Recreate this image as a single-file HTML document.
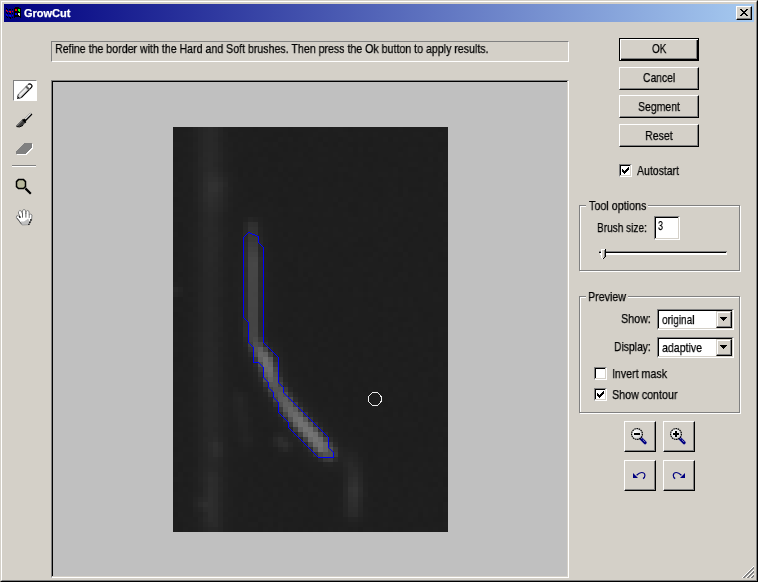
<!DOCTYPE html>
<html><head><meta charset="utf-8"><title>GrowCut</title>
<style>
html,body{margin:0;padding:0}
body{width:758px;height:582px;overflow:hidden;position:relative;background:#d4d0c8;font-family:"Liberation Sans",sans-serif;font-size:13px;color:#000}
.a{position:absolute}
.t{position:absolute;white-space:nowrap;will-change:transform;-webkit-text-stroke:0.25px currentColor;transform-origin:0 0;line-height:15px;height:15px}
.btn{position:absolute;box-sizing:border-box;background:#d4d0c8;border:1px solid;border-color:#fff #000 #000 #fff;box-shadow:inset -1px -1px 0 #808080}
.sunk{position:absolute;box-sizing:border-box;border:1px solid;border-color:#808080 #fff #fff #808080}
.sunk2{position:absolute;box-sizing:border-box;border:1px solid;border-color:#808080 #fff #fff #808080;box-shadow:inset -1px -1px 0 #d4d0c8,inset 1px 1px 0 #000;background:#fff}
.grp{position:absolute;box-sizing:border-box;border:1px solid #808080;box-shadow:1px 1px 0 #fff,inset 1px 1px 0 #fff}
.lbl{background:#d4d0c8}
.b2{border-color:#d4d0c8 #000 #000 #d4d0c8;box-shadow:inset -1px -1px 0 #808080,inset 1px 1px 0 #fff}
</style></head><body>
<!-- window frame -->
<div class="a" style="left:0;top:0;width:758px;height:582px;box-sizing:border-box;border:1px solid;border-color:#d4d0c8 #000 #000 #d4d0c8"></div>
<div class="a" style="left:1px;top:1px;width:756px;height:580px;box-sizing:border-box;border:1px solid;border-color:#fff #808080 #808080 #fff"></div>
<!-- title bar -->
<div class="a" id="title" style="left:4px;top:4px;width:750px;height:18px;background:linear-gradient(90deg,#000080,#a6caf0)"></div>
<span class="t" id="ttl" style="left:24.00px;top:6px;color:#fff;font-weight:bold;font-size:11px;transform:scaleX(1.0004)">GrowCut</span>
<!--TICON-->
<svg class="a" style="left:4px;top:4px" width="20" height="18" viewBox="4 4 20 18" shape-rendering="crispEdges">
<path d="M15 7h4v1h2v10h-1v-1h-5v1h-1v-10h1z" fill="#000"/>
<rect x="15" y="9" width="2" height="2" fill="#ff0000"/>
<rect x="18" y="9" width="2" height="2" fill="#00ff00"/><rect x="19" y="11" width="1" height="1" fill="#00ff00"/>
<rect x="15" y="13" width="2" height="2" fill="#0000ff"/>
<rect x="18" y="13" width="2" height="2" fill="#e0e0c0"/><rect x="19" y="15" width="1" height="1" fill="#e0e0c0"/>
<g fill="#000"><rect x="6" y="8" width="1" height="1"/><rect x="7" y="9" width="1" height="1"/><rect x="9" y="9" width="2" height="1"/><rect x="12" y="9" width="1" height="1"/>
<rect x="6" y="12" width="1" height="1"/><rect x="7" y="13" width="1" height="1"/><rect x="9" y="13" width="2" height="1"/><rect x="12" y="13" width="1" height="1"/>
<rect x="6" y="16" width="1" height="1"/><rect x="7" y="17" width="1" height="1"/><rect x="10" y="17" width="1" height="2"/><rect x="9" y="17" width="1" height="1"/><rect x="12" y="17" width="1" height="1"/></g>
<g fill="#ff0000"><rect x="6" y="10" width="1" height="1"/><rect x="7" y="11" width="1" height="1"/><rect x="9" y="11" width="2" height="1"/><rect x="10" y="12" width="1" height="1"/><rect x="12" y="11" width="1" height="1"/></g>
<g fill="#0000ff"><rect x="6" y="14" width="1" height="1"/><rect x="7" y="15" width="1" height="1"/><rect x="6" y="15" width="1" height="1" opacity="0.5"/><rect x="9" y="15" width="2" height="1"/><rect x="10" y="16" width="1" height="1"/><rect x="12" y="15" width="1" height="1"/></g>
</svg>
<!--/TICON-->
<!-- close -->
<div class="btn" style="left:736px;top:6px;width:16px;height:14px"></div>
<svg class="a" style="left:740px;top:9px" width="8" height="7" shape-rendering="crispEdges"><path d="M0 0h2v1h1v1h2v-1h1v-1h2v1h-1v1h-1v1h-1v1h1v1h1v1h1v1h-2v-1h-1v-1h-2v1h-1v1h-2v-1h1v-1h1v-1h1v-1h-1v-1h-1v-1h-1z" fill="#000"/></svg>
<!-- status -->
<div class="sunk" style="left:51px;top:41px;width:518px;height:21px"></div>
<span class="t" id="status" style="left:55.18px;top:41px;transform:scaleX(0.8166)">Refine the border with the Hard and Soft brushes. Then press the Ok button to apply results.</span>
<!-- canvas frame -->
<div class="sunk2" id="canvas" style="left:51px;top:80px;width:518px;height:498px;background:#c0c0c0"></div>
<div class="a" id="img" style="left:173px;top:127px;width:275px;height:405px;background:#1e1e1e"></div>
<!--IMG--><svg class="a" id="imgsvg" style="left:173px;top:127px" width="275" height="405" viewBox="0 0 275 405" shape-rendering="crispEdges">
<path fill="#1d1d1d" d="M80 0h5v5h-5zM115 0h5v5h-5zM175 0h5v5h-5zM265 0h5v5h-5zM100 5h10v5h-10zM115 5h15v5h-15zM255 5h5v5h-5zM90 10h15v5h-15zM120 10h5v5h-5zM145 10h5v5h-5zM165 10h5v5h-5zM195 10h5v5h-5zM215 10h5v5h-5zM105 15h10v5h-10zM130 15h5v5h-5zM150 15h5v5h-5zM160 15h5v5h-5zM175 15h10v5h-10zM190 15h10v5h-10zM230 15h5v5h-5zM245 15h5v5h-5zM265 15h10v5h-10zM90 20h5v5h-5zM110 20h5v5h-5zM120 20h5v5h-5zM135 20h5v5h-5zM180 20h5v5h-5zM190 20h5v5h-5zM225 20h5v5h-5zM265 20h5v5h-5zM75 25h5v5h-5zM85 25h5v5h-5zM95 25h10v5h-10zM130 25h5v5h-5zM180 25h5v5h-5zM190 25h15v5h-15zM0 30h5v5h-5zM70 30h5v5h-5zM95 30h15v5h-15zM135 30h5v5h-5zM200 30h5v5h-5zM210 30h5v5h-5zM250 30h5v5h-5zM260 30h5v5h-5zM165 35h5v5h-5zM175 35h5v5h-5zM190 35h10v5h-10zM215 35h10v5h-10zM65 40h5v5h-5zM80 40h5v5h-5zM95 40h10v5h-10zM110 40h5v5h-5zM125 40h5v5h-5zM195 40h5v5h-5zM225 40h5v5h-5zM235 40h10v5h-10zM65 45h5v5h-5zM75 45h5v5h-5zM90 45h5v5h-5zM105 45h5v5h-5zM115 45h15v5h-15zM160 45h5v5h-5zM170 45h5v5h-5zM260 45h5v5h-5zM5 50h5v5h-5zM110 50h5v5h-5zM120 50h5v5h-5zM150 50h5v5h-5zM160 50h5v5h-5zM170 50h10v5h-10zM205 50h5v5h-5zM225 50h5v5h-5zM245 50h5v5h-5zM115 55h5v5h-5zM135 55h10v5h-10zM155 55h5v5h-5zM185 55h5v5h-5zM195 55h5v5h-5zM225 55h5v5h-5zM270 55h5v5h-5zM75 60h5v5h-5zM105 60h5v5h-5zM125 60h5v5h-5zM180 60h5v5h-5zM200 60h10v5h-10zM225 60h5v5h-5zM235 60h15v5h-15zM80 65h10v5h-10zM130 65h5v5h-5zM185 65h5v5h-5zM205 65h5v5h-5zM225 65h5v5h-5zM255 65h5v5h-5zM0 70h5v5h-5zM75 70h5v5h-5zM95 70h5v5h-5zM105 70h10v5h-10zM165 70h5v5h-5zM200 70h5v5h-5zM105 75h10v5h-10zM135 75h5v5h-5zM160 75h5v5h-5zM175 75h10v5h-10zM265 75h5v5h-5zM175 80h10v5h-10zM205 80h5v5h-5zM235 80h5v5h-5zM110 85h5v5h-5zM180 85h5v5h-5zM220 85h5v5h-5zM250 85h5v5h-5zM125 90h5v5h-5zM135 90h5v5h-5zM230 90h5v5h-5zM5 95h5v5h-5zM140 95h5v5h-5zM225 95h5v5h-5zM245 95h5v5h-5zM270 95h5v5h-5zM5 100h5v5h-5zM205 100h5v5h-5zM220 100h5v5h-5zM245 100h5v5h-5zM5 105h5v5h-5zM110 105h5v5h-5zM130 105h5v5h-5zM220 105h5v5h-5zM240 105h5v5h-5zM260 105h5v5h-5zM140 110h5v5h-5zM185 110h5v5h-5zM195 110h5v5h-5zM210 110h5v5h-5zM235 110h5v5h-5zM250 110h5v5h-5zM265 110h5v5h-5zM125 115h5v5h-5zM160 115h5v5h-5zM180 115h20v5h-20zM230 115h5v5h-5zM155 120h5v5h-5zM200 120h5v5h-5zM230 120h5v5h-5zM255 120h5v5h-5zM0 125h5v5h-5zM130 125h5v5h-5zM165 125h5v5h-5zM180 125h5v5h-5zM190 125h10v5h-10zM210 125h5v5h-5zM220 125h10v5h-10zM235 125h5v5h-5zM265 125h5v5h-5zM120 130h5v5h-5zM170 130h5v5h-5zM205 130h5v5h-5zM250 130h5v5h-5zM265 130h10v5h-10zM110 135h10v5h-10zM150 135h5v5h-5zM170 135h10v5h-10zM225 135h5v5h-5zM115 140h10v5h-10zM220 140h10v5h-10zM255 140h5v5h-5zM5 145h5v5h-5zM120 145h5v5h-5zM130 145h5v5h-5zM150 145h10v5h-10zM190 145h10v5h-10zM220 145h5v5h-5zM235 145h5v5h-5zM255 145h5v5h-5zM265 145h10v5h-10zM135 150h5v5h-5zM210 150h5v5h-5zM115 155h5v5h-5zM130 155h10v5h-10zM155 155h5v5h-5zM190 155h5v5h-5zM230 155h5v5h-5zM115 160h15v5h-15zM135 160h5v5h-5zM145 160h5v5h-5zM165 160h5v5h-5zM175 160h5v5h-5zM190 160h5v5h-5zM230 160h5v5h-5zM260 160h5v5h-5zM150 165h5v5h-5zM5 170h5v5h-5zM190 170h5v5h-5zM200 170h5v5h-5zM240 170h5v5h-5zM155 175h5v5h-5zM195 175h5v5h-5zM205 175h5v5h-5zM120 180h5v5h-5zM155 180h5v5h-5zM165 180h5v5h-5zM205 180h5v5h-5zM215 180h10v5h-10zM245 180h5v5h-5zM0 185h5v5h-5zM150 185h5v5h-5zM160 185h5v5h-5zM250 185h10v5h-10zM5 190h5v5h-5zM115 190h5v5h-5zM135 190h5v5h-5zM150 190h5v5h-5zM160 190h10v5h-10zM205 190h5v5h-5zM225 190h10v5h-10zM250 190h5v5h-5zM150 195h5v5h-5zM175 195h5v5h-5zM200 195h5v5h-5zM215 195h5v5h-5zM5 200h5v5h-5zM105 200h5v5h-5zM145 200h5v5h-5zM155 200h5v5h-5zM195 200h5v5h-5zM205 200h5v5h-5zM225 200h5v5h-5zM235 200h5v5h-5zM260 200h5v5h-5zM115 205h5v5h-5zM140 205h5v5h-5zM165 205h5v5h-5zM200 205h10v5h-10zM120 210h5v5h-5zM150 210h5v5h-5zM180 210h5v5h-5zM220 210h5v5h-5zM260 210h5v5h-5zM130 215h5v5h-5zM140 215h5v5h-5zM165 215h10v5h-10zM180 215h5v5h-5zM190 215h5v5h-5zM205 215h10v5h-10zM235 215h5v5h-5zM260 215h5v5h-5zM145 220h10v5h-10zM200 220h5v5h-5zM225 220h5v5h-5zM255 220h15v5h-15zM5 225h5v5h-5zM170 225h5v5h-5zM180 225h10v5h-10zM200 225h5v5h-5zM215 225h5v5h-5zM240 225h5v5h-5zM0 230h10v5h-10zM175 230h5v5h-5zM185 230h5v5h-5zM195 230h5v5h-5zM225 230h10v5h-10zM250 230h5v5h-5zM260 230h5v5h-5zM140 235h5v5h-5zM170 235h5v5h-5zM205 235h5v5h-5zM260 235h5v5h-5zM270 235h5v5h-5zM140 240h5v5h-5zM160 240h5v5h-5zM180 240h5v5h-5zM210 240h5v5h-5zM245 240h10v5h-10zM130 245h5v5h-5zM170 245h5v5h-5zM180 245h5v5h-5zM220 245h5v5h-5zM240 245h5v5h-5zM150 250h5v5h-5zM180 250h5v5h-5zM200 250h5v5h-5zM225 250h10v5h-10zM255 250h10v5h-10zM140 255h5v5h-5zM155 255h5v5h-5zM175 255h5v5h-5zM185 255h5v5h-5zM260 255h10v5h-10zM155 260h5v5h-5zM170 260h10v5h-10zM190 260h5v5h-5zM215 260h5v5h-5zM260 260h5v5h-5zM160 265h5v5h-5zM170 265h15v5h-15zM195 265h5v5h-5zM205 265h5v5h-5zM235 265h5v5h-5zM255 265h5v5h-5zM150 270h5v5h-5zM175 270h5v5h-5zM195 270h5v5h-5zM235 270h5v5h-5zM170 275h10v5h-10zM210 275h5v5h-5zM230 275h5v5h-5zM240 275h5v5h-5zM175 280h5v5h-5zM215 280h5v5h-5zM225 280h5v5h-5zM240 280h5v5h-5zM250 280h5v5h-5zM170 285h10v5h-10zM210 285h10v5h-10zM225 285h5v5h-5zM250 285h5v5h-5zM190 290h5v5h-5zM240 290h5v5h-5zM260 290h5v5h-5zM190 295h10v5h-10zM245 295h5v5h-5zM270 295h5v5h-5zM90 300h5v5h-5zM180 300h5v5h-5zM205 300h5v5h-5zM245 300h5v5h-5zM255 300h5v5h-5zM185 305h5v5h-5zM215 305h10v5h-10zM230 305h5v5h-5zM250 305h5v5h-5zM265 305h5v5h-5zM10 310h5v5h-5zM195 310h5v5h-5zM210 310h5v5h-5zM240 310h5v5h-5zM250 310h5v5h-5zM270 310h5v5h-5zM200 315h5v5h-5zM225 315h5v5h-5zM250 315h5v5h-5zM270 315h5v5h-5zM0 320h5v5h-5zM200 320h5v5h-5zM215 320h5v5h-5zM225 320h5v5h-5zM95 325h5v5h-5zM195 325h5v5h-5zM230 325h10v5h-10zM195 330h5v5h-5zM225 330h10v5h-10zM255 330h5v5h-5zM5 335h5v5h-5zM80 335h5v5h-5zM215 335h5v5h-5zM5 340h5v5h-5zM80 340h5v5h-5zM110 340h5v5h-5zM125 340h5v5h-5zM215 340h5v5h-5zM240 340h5v5h-5zM0 345h5v5h-5zM10 345h5v5h-5zM85 345h5v5h-5zM135 345h5v5h-5zM225 345h5v5h-5zM260 345h5v5h-5zM70 350h5v5h-5zM80 350h5v5h-5zM115 350h10v5h-10zM210 350h5v5h-5zM225 350h5v5h-5zM270 350h5v5h-5zM0 355h5v5h-5zM10 355h5v5h-5zM85 355h5v5h-5zM100 355h10v5h-10zM115 355h15v5h-15zM140 355h5v5h-5zM255 355h10v5h-10zM270 355h5v5h-5zM0 360h5v5h-5zM90 360h5v5h-5zM120 360h5v5h-5zM130 360h5v5h-5zM230 360h5v5h-5zM65 365h5v5h-5zM95 365h5v5h-5zM105 365h5v5h-5zM125 365h5v5h-5zM135 365h10v5h-10zM230 365h5v5h-5zM90 370h5v5h-5zM135 370h5v5h-5zM200 370h5v5h-5zM220 370h5v5h-5zM270 370h5v5h-5zM0 375h5v5h-5zM75 375h5v5h-5zM100 375h5v5h-5zM135 375h5v5h-5zM210 375h5v5h-5zM265 375h5v5h-5zM85 380h5v5h-5zM120 380h5v5h-5zM135 380h10v5h-10zM155 380h5v5h-5zM200 380h5v5h-5zM220 380h5v5h-5zM265 380h5v5h-5zM0 385h5v5h-5zM65 385h5v5h-5zM90 385h5v5h-5zM100 385h5v5h-5zM145 385h5v5h-5zM155 385h5v5h-5zM245 385h5v5h-5zM265 385h5v5h-5zM75 390h10v5h-10zM110 390h10v5h-10zM130 390h10v5h-10zM220 390h10v5h-10zM245 390h5v5h-5zM260 390h10v5h-10zM5 395h5v5h-5zM85 395h5v5h-5zM100 395h5v5h-5zM130 395h5v5h-5zM140 395h10v5h-10zM200 395h5v5h-5zM235 395h5v5h-5zM250 395h5v5h-5zM5 400h5v5h-5zM85 400h5v5h-5zM110 400h5v5h-5zM125 400h5v5h-5zM135 400h5v5h-5zM145 400h5v5h-5zM185 400h5v5h-5zM215 400h5v5h-5zM225 400h5v5h-5z"/>
<path fill="#1f1f1f" d="M15 0h5v5h-5zM55 0h10v5h-10zM145 0h10v5h-10zM160 0h10v5h-10zM225 0h5v5h-5zM10 5h5v5h-5zM65 5h5v5h-5zM140 5h5v5h-5zM165 5h10v5h-10zM185 5h5v5h-5zM200 5h5v5h-5zM240 5h10v5h-10zM265 5h5v5h-5zM15 10h5v5h-5zM55 10h10v5h-10zM80 10h5v5h-5zM105 10h5v5h-5zM115 10h5v5h-5zM135 10h5v5h-5zM150 10h5v5h-5zM175 10h5v5h-5zM210 10h5v5h-5zM220 10h5v5h-5zM230 10h5v5h-5zM250 10h10v5h-10zM0 15h10v5h-10zM15 15h5v5h-5zM65 15h5v5h-5zM75 15h5v5h-5zM90 15h5v5h-5zM100 15h5v5h-5zM135 15h5v5h-5zM145 15h5v5h-5zM165 15h5v5h-5zM10 20h5v5h-5zM55 20h5v5h-5zM65 20h5v5h-5zM80 20h5v5h-5zM145 20h10v5h-10zM175 20h5v5h-5zM185 20h5v5h-5zM195 20h5v5h-5zM235 20h10v5h-10zM255 20h5v5h-5zM15 25h5v5h-5zM60 25h5v5h-5zM125 25h5v5h-5zM160 25h5v5h-5zM225 25h5v5h-5zM235 25h5v5h-5zM265 25h5v5h-5zM10 30h10v5h-10zM85 30h10v5h-10zM145 30h10v5h-10zM165 30h5v5h-5zM255 30h5v5h-5zM265 30h5v5h-5zM5 35h5v5h-5zM55 35h5v5h-5zM105 35h5v5h-5zM120 35h10v5h-10zM185 35h5v5h-5zM235 35h10v5h-10zM270 35h5v5h-5zM10 40h5v5h-5zM55 40h10v5h-10zM85 40h5v5h-5zM105 40h5v5h-5zM145 40h5v5h-5zM165 40h10v5h-10zM220 40h5v5h-5zM250 40h10v5h-10zM270 40h5v5h-5zM10 45h10v5h-10zM60 45h5v5h-5zM70 45h5v5h-5zM85 45h5v5h-5zM180 45h5v5h-5zM205 45h10v5h-10zM220 45h5v5h-5zM265 45h5v5h-5zM0 50h5v5h-5zM10 50h10v5h-10zM90 50h5v5h-5zM100 50h5v5h-5zM115 50h5v5h-5zM135 50h5v5h-5zM270 50h5v5h-5zM5 55h15v5h-15zM60 55h10v5h-10zM165 55h5v5h-5zM215 55h5v5h-5zM250 55h5v5h-5zM265 55h5v5h-5zM10 60h5v5h-5zM60 60h10v5h-10zM110 60h5v5h-5zM135 60h5v5h-5zM145 60h5v5h-5zM220 60h5v5h-5zM230 60h5v5h-5zM265 60h5v5h-5zM0 65h10v5h-10zM15 65h5v5h-5zM60 65h5v5h-5zM70 65h5v5h-5zM95 65h5v5h-5zM145 65h5v5h-5zM215 65h5v5h-5zM230 65h5v5h-5zM250 65h5v5h-5zM270 65h5v5h-5zM10 70h10v5h-10zM60 70h10v5h-10zM90 70h5v5h-5zM135 70h5v5h-5zM145 70h5v5h-5zM160 70h5v5h-5zM175 70h5v5h-5zM220 70h10v5h-10zM240 70h5v5h-5zM255 70h5v5h-5zM15 75h5v5h-5zM60 75h5v5h-5zM75 75h10v5h-10zM95 75h5v5h-5zM165 75h10v5h-10zM190 75h5v5h-5zM200 75h5v5h-5zM215 75h5v5h-5zM0 80h10v5h-10zM15 80h5v5h-5zM65 80h15v5h-15zM85 80h15v5h-15zM105 80h5v5h-5zM120 80h10v5h-10zM155 80h5v5h-5zM200 80h5v5h-5zM210 80h5v5h-5zM220 80h10v5h-10zM60 85h30v5h-30zM95 85h10v5h-10zM140 85h5v5h-5zM150 85h10v5h-10zM170 85h5v5h-5zM200 85h5v5h-5zM210 85h5v5h-5zM225 85h5v5h-5zM235 85h5v5h-5zM265 85h10v5h-10zM0 90h20v5h-20zM55 90h15v5h-15zM90 90h5v5h-5zM175 90h10v5h-10zM190 90h5v5h-5zM210 90h5v5h-5zM220 90h5v5h-5zM245 90h5v5h-5zM270 90h5v5h-5zM10 95h10v5h-10zM60 95h10v5h-10zM90 95h10v5h-10zM105 95h5v5h-5zM205 95h5v5h-5zM60 100h10v5h-10zM95 100h5v5h-5zM140 100h5v5h-5zM150 100h5v5h-5zM160 100h5v5h-5zM175 100h5v5h-5zM200 100h5v5h-5zM240 100h5v5h-5zM0 105h5v5h-5zM15 105h5v5h-5zM55 105h5v5h-5zM95 105h5v5h-5zM105 105h5v5h-5zM115 105h5v5h-5zM135 105h5v5h-5zM160 105h10v5h-10zM185 105h5v5h-5zM210 105h5v5h-5zM15 110h5v5h-5zM95 110h5v5h-5zM110 110h5v5h-5zM145 110h5v5h-5zM175 110h10v5h-10zM215 110h10v5h-10zM270 110h5v5h-5zM10 115h5v5h-5zM60 115h5v5h-5zM150 115h5v5h-5zM170 115h5v5h-5zM205 115h15v5h-15zM10 120h10v5h-10zM95 120h5v5h-5zM115 120h5v5h-5zM130 120h5v5h-5zM210 120h5v5h-5zM225 120h5v5h-5zM270 120h5v5h-5zM60 125h5v5h-5zM100 125h5v5h-5zM110 125h10v5h-10zM125 125h5v5h-5zM140 125h5v5h-5zM200 125h5v5h-5zM230 125h5v5h-5zM255 125h5v5h-5zM15 130h5v5h-5zM115 130h5v5h-5zM125 130h5v5h-5zM135 130h5v5h-5zM195 130h5v5h-5zM210 130h5v5h-5zM255 130h5v5h-5zM5 135h5v5h-5zM15 135h5v5h-5zM95 135h15v5h-15zM125 135h15v5h-15zM155 135h5v5h-5zM185 135h5v5h-5zM230 135h5v5h-5zM245 135h5v5h-5zM5 140h5v5h-5zM15 140h5v5h-5zM55 140h5v5h-5zM95 140h10v5h-10zM125 140h5v5h-5zM170 140h10v5h-10zM190 140h5v5h-5zM15 145h5v5h-5zM55 145h5v5h-5zM125 145h5v5h-5zM135 145h5v5h-5zM145 145h5v5h-5zM205 145h5v5h-5zM225 145h10v5h-10zM245 145h5v5h-5zM5 150h5v5h-5zM55 150h5v5h-5zM100 150h5v5h-5zM115 150h5v5h-5zM130 150h5v5h-5zM150 150h5v5h-5zM170 150h5v5h-5zM195 150h5v5h-5zM205 150h5v5h-5zM220 150h5v5h-5zM230 150h5v5h-5zM5 155h5v5h-5zM15 155h5v5h-5zM55 155h5v5h-5zM95 155h5v5h-5zM105 155h5v5h-5zM145 155h5v5h-5zM200 155h5v5h-5zM215 155h5v5h-5zM250 155h5v5h-5zM10 160h5v5h-5zM100 160h5v5h-5zM155 160h5v5h-5zM180 160h5v5h-5zM250 160h5v5h-5zM10 165h5v5h-5zM55 165h5v5h-5zM100 165h5v5h-5zM110 165h5v5h-5zM125 165h10v5h-10zM155 165h5v5h-5zM180 165h10v5h-10zM195 165h5v5h-5zM260 165h5v5h-5zM10 170h5v5h-5zM55 170h5v5h-5zM100 170h5v5h-5zM145 170h5v5h-5zM210 170h10v5h-10zM225 170h5v5h-5zM235 170h5v5h-5zM260 170h10v5h-10zM15 175h5v5h-5zM100 175h10v5h-10zM135 175h5v5h-5zM210 175h10v5h-10zM225 175h5v5h-5zM235 175h5v5h-5zM0 180h10v5h-10zM100 180h10v5h-10zM180 180h5v5h-5zM195 180h5v5h-5zM10 185h5v5h-5zM60 185h5v5h-5zM95 185h10v5h-10zM120 185h5v5h-5zM130 185h5v5h-5zM180 185h5v5h-5zM205 185h10v5h-10zM220 185h5v5h-5zM240 185h5v5h-5zM60 190h5v5h-5zM100 190h5v5h-5zM125 190h5v5h-5zM170 190h10v5h-10zM215 190h5v5h-5zM240 190h5v5h-5zM15 195h5v5h-5zM55 195h10v5h-10zM95 195h15v5h-15zM115 195h5v5h-5zM125 195h5v5h-5zM230 195h10v5h-10zM15 200h5v5h-5zM60 200h5v5h-5zM95 200h10v5h-10zM135 200h5v5h-5zM150 200h5v5h-5zM160 200h5v5h-5zM220 200h5v5h-5zM240 200h5v5h-5zM265 200h10v5h-10zM0 205h5v5h-5zM55 205h10v5h-10zM100 205h5v5h-5zM135 205h5v5h-5zM145 205h5v5h-5zM195 205h5v5h-5zM210 205h5v5h-5zM255 205h5v5h-5zM265 205h5v5h-5zM0 210h5v5h-5zM10 210h10v5h-10zM55 210h5v5h-5zM105 210h5v5h-5zM115 210h5v5h-5zM130 210h10v5h-10zM155 210h5v5h-5zM190 210h5v5h-5zM210 210h5v5h-5zM225 210h10v5h-10zM240 210h10v5h-10zM255 210h5v5h-5zM15 215h5v5h-5zM55 215h10v5h-10zM110 215h5v5h-5zM145 215h10v5h-10zM175 215h5v5h-5zM245 215h5v5h-5zM255 215h5v5h-5zM0 220h5v5h-5zM10 220h10v5h-10zM55 220h10v5h-10zM140 220h5v5h-5zM190 220h5v5h-5zM210 220h5v5h-5zM235 220h5v5h-5zM55 225h5v5h-5zM120 225h5v5h-5zM130 225h5v5h-5zM175 225h5v5h-5zM190 225h10v5h-10zM225 225h5v5h-5zM250 225h10v5h-10zM10 230h10v5h-10zM65 230h5v5h-5zM125 230h10v5h-10zM150 230h5v5h-5zM245 230h5v5h-5zM255 230h5v5h-5zM10 235h5v5h-5zM65 235h5v5h-5zM115 235h10v5h-10zM130 235h5v5h-5zM155 235h5v5h-5zM165 235h5v5h-5zM175 235h5v5h-5zM210 235h5v5h-5zM230 235h5v5h-5zM265 235h5v5h-5zM5 240h5v5h-5zM15 240h5v5h-5zM55 240h20v5h-20zM115 240h10v5h-10zM135 240h5v5h-5zM170 240h5v5h-5zM185 240h5v5h-5zM195 240h5v5h-5zM205 240h5v5h-5zM260 240h5v5h-5zM0 245h20v5h-20zM55 245h10v5h-10zM115 245h5v5h-5zM135 245h5v5h-5zM215 245h5v5h-5zM230 245h5v5h-5zM245 245h15v5h-15zM265 245h5v5h-5zM0 250h5v5h-5zM10 250h10v5h-10zM55 250h10v5h-10zM70 250h10v5h-10zM125 250h5v5h-5zM160 250h5v5h-5zM190 250h5v5h-5zM250 250h5v5h-5zM15 255h5v5h-5zM75 255h5v5h-5zM125 255h5v5h-5zM150 255h5v5h-5zM160 255h10v5h-10zM205 255h10v5h-10zM225 255h5v5h-5zM250 255h5v5h-5zM55 260h5v5h-5zM65 260h5v5h-5zM125 260h10v5h-10zM165 260h5v5h-5zM180 260h5v5h-5zM195 260h5v5h-5zM210 260h5v5h-5zM220 260h5v5h-5zM15 265h5v5h-5zM75 265h5v5h-5zM130 265h10v5h-10zM200 265h5v5h-5zM225 265h10v5h-10zM240 265h5v5h-5zM250 265h5v5h-5zM265 265h5v5h-5zM0 270h10v5h-10zM15 270h5v5h-5zM75 270h10v5h-10zM135 270h5v5h-5zM155 270h5v5h-5zM170 270h5v5h-5zM180 270h5v5h-5zM205 270h5v5h-5zM215 270h5v5h-5zM240 270h5v5h-5zM255 270h15v5h-15zM10 275h5v5h-5zM75 275h5v5h-5zM85 275h5v5h-5zM140 275h5v5h-5zM200 275h5v5h-5zM245 275h5v5h-5zM10 280h10v5h-10zM80 280h15v5h-15zM150 280h10v5h-10zM165 280h5v5h-5zM205 280h5v5h-5zM5 285h10v5h-10zM75 285h20v5h-20zM150 285h10v5h-10zM165 285h5v5h-5zM220 285h5v5h-5zM230 285h5v5h-5zM270 285h5v5h-5zM15 290h5v5h-5zM90 290h5v5h-5zM160 290h5v5h-5zM170 290h5v5h-5zM180 290h5v5h-5zM210 290h5v5h-5zM245 290h5v5h-5zM5 295h5v5h-5zM85 295h20v5h-20zM155 295h15v5h-15zM175 295h15v5h-15zM210 295h5v5h-5zM230 295h15v5h-15zM15 300h5v5h-5zM55 300h5v5h-5zM80 300h5v5h-5zM100 300h5v5h-5zM160 300h10v5h-10zM175 300h5v5h-5zM190 300h5v5h-5zM215 300h5v5h-5zM260 300h5v5h-5zM270 300h5v5h-5zM0 305h10v5h-10zM80 305h10v5h-10zM165 305h10v5h-10zM5 310h5v5h-5zM15 310h5v5h-5zM55 310h5v5h-5zM80 310h5v5h-5zM170 310h20v5h-20zM265 310h5v5h-5zM55 315h5v5h-5zM80 315h10v5h-10zM170 315h5v5h-5zM180 315h10v5h-10zM10 320h10v5h-10zM60 320h10v5h-10zM75 320h5v5h-5zM100 320h5v5h-5zM185 320h5v5h-5zM245 320h5v5h-5zM255 320h5v5h-5zM265 320h5v5h-5zM5 325h5v5h-5zM60 325h15v5h-15zM100 325h5v5h-5zM120 325h5v5h-5zM185 325h10v5h-10zM215 325h5v5h-5zM270 325h5v5h-5zM0 330h10v5h-10zM20 330h5v5h-5zM55 330h10v5h-10zM80 330h5v5h-5zM100 330h5v5h-5zM125 330h5v5h-5zM190 330h5v5h-5zM205 330h10v5h-10zM20 335h5v5h-5zM55 335h5v5h-5zM85 335h5v5h-5zM95 335h5v5h-5zM130 335h5v5h-5zM190 335h5v5h-5zM210 335h5v5h-5zM230 335h10v5h-10zM250 335h5v5h-5zM265 335h5v5h-5zM10 340h10v5h-10zM55 340h5v5h-5zM65 340h5v5h-5zM90 340h5v5h-5zM115 340h5v5h-5zM135 340h10v5h-10zM190 340h10v5h-10zM230 340h5v5h-5zM245 340h5v5h-5zM255 340h5v5h-5zM270 340h5v5h-5zM5 345h5v5h-5zM60 345h5v5h-5zM105 345h5v5h-5zM125 345h5v5h-5zM140 345h15v5h-15zM160 345h5v5h-5zM195 345h5v5h-5zM210 345h5v5h-5zM240 345h5v5h-5zM0 350h10v5h-10zM15 350h5v5h-5zM55 350h15v5h-15zM75 350h5v5h-5zM150 350h10v5h-10zM165 350h5v5h-5zM215 350h5v5h-5zM230 350h5v5h-5zM260 350h5v5h-5zM55 355h10v5h-10zM75 355h5v5h-5zM110 355h5v5h-5zM135 355h5v5h-5zM165 355h5v5h-5zM195 355h5v5h-5zM205 355h5v5h-5zM230 355h5v5h-5zM240 355h10v5h-10zM265 355h5v5h-5zM10 360h5v5h-5zM55 360h5v5h-5zM80 360h10v5h-10zM100 360h5v5h-5zM125 360h5v5h-5zM135 360h10v5h-10zM160 360h10v5h-10zM200 360h5v5h-5zM215 360h10v5h-10zM245 360h10v5h-10zM260 360h5v5h-5zM270 360h5v5h-5zM15 365h5v5h-5zM55 365h5v5h-5zM75 365h5v5h-5zM85 365h5v5h-5zM100 365h5v5h-5zM145 365h5v5h-5zM165 365h5v5h-5zM220 365h5v5h-5zM235 365h5v5h-5zM255 365h5v5h-5zM5 370h5v5h-5zM15 370h5v5h-5zM75 370h5v5h-5zM195 370h5v5h-5zM215 370h5v5h-5zM245 370h5v5h-5zM15 375h5v5h-5zM70 375h5v5h-5zM90 375h10v5h-10zM110 375h15v5h-15zM165 375h5v5h-5zM190 375h15v5h-15zM215 375h10v5h-10zM235 375h5v5h-5zM245 375h5v5h-5zM270 375h5v5h-5zM55 380h10v5h-10zM70 380h5v5h-5zM80 380h5v5h-5zM90 380h5v5h-5zM110 380h5v5h-5zM125 380h5v5h-5zM160 380h5v5h-5zM210 380h5v5h-5zM225 380h5v5h-5zM240 380h5v5h-5zM250 380h5v5h-5zM260 380h5v5h-5zM270 380h5v5h-5zM5 385h5v5h-5zM60 385h5v5h-5zM70 385h5v5h-5zM105 385h5v5h-5zM115 385h5v5h-5zM165 385h5v5h-5zM195 385h5v5h-5zM210 385h5v5h-5zM235 385h10v5h-10zM250 385h5v5h-5zM10 390h15v5h-15zM55 390h5v5h-5zM65 390h5v5h-5zM85 390h15v5h-15zM160 390h10v5h-10zM190 390h5v5h-5zM235 390h5v5h-5zM15 395h5v5h-5zM55 395h5v5h-5zM75 395h10v5h-10zM95 395h5v5h-5zM105 395h5v5h-5zM170 395h5v5h-5zM185 395h5v5h-5zM210 395h5v5h-5zM270 395h5v5h-5zM10 400h5v5h-5zM20 400h5v5h-5zM55 400h5v5h-5zM90 400h5v5h-5zM105 400h5v5h-5zM155 400h5v5h-5zM165 400h10v5h-10zM180 400h5v5h-5zM190 400h10v5h-10zM240 400h15v5h-15zM260 400h5v5h-5z"/>
<path fill="#202020" d="M50 0h5v5h-5zM15 5h5v5h-5zM50 15h10v5h-10zM15 20h5v5h-5zM55 25h5v5h-5zM55 30h5v5h-5zM15 35h5v5h-5zM15 40h5v5h-5zM60 50h5v5h-5zM55 70h5v5h-5zM55 80h5v5h-5zM15 85h10v5h-10zM55 85h5v5h-5zM20 90h5v5h-5zM55 95h5v5h-5zM15 100h5v5h-5zM55 100h5v5h-5zM90 100h5v5h-5zM60 105h10v5h-10zM90 105h5v5h-5zM55 110h15v5h-15zM15 115h5v5h-5zM55 115h5v5h-5zM65 115h5v5h-5zM90 115h5v5h-5zM55 120h15v5h-15zM15 125h5v5h-5zM55 125h5v5h-5zM90 125h10v5h-10zM50 130h15v5h-15zM95 130h5v5h-5zM55 135h5v5h-5zM20 140h5v5h-5zM60 140h5v5h-5zM60 145h5v5h-5zM95 145h5v5h-5zM15 150h5v5h-5zM50 150h5v5h-5zM60 150h5v5h-5zM95 150h5v5h-5zM0 155h5v5h-5zM15 160h5v5h-5zM55 160h10v5h-10zM95 160h5v5h-5zM20 165h5v5h-5zM60 165h5v5h-5zM95 165h5v5h-5zM15 170h5v5h-5zM50 170h5v5h-5zM60 170h5v5h-5zM95 170h5v5h-5zM20 175h5v5h-5zM55 175h10v5h-10zM95 175h5v5h-5zM50 180h15v5h-15zM95 180h5v5h-5zM15 185h10v5h-10zM50 185h10v5h-10zM15 190h5v5h-5zM50 190h10v5h-10zM95 190h5v5h-5zM50 195h5v5h-5zM50 200h10v5h-10zM15 205h5v5h-5zM95 205h5v5h-5zM60 210h5v5h-5zM95 210h10v5h-10zM65 215h5v5h-5zM105 215h5v5h-5zM65 220h5v5h-5zM15 225h5v5h-5zM50 225h5v5h-5zM65 225h5v5h-5zM110 225h5v5h-5zM55 230h5v5h-5zM110 230h5v5h-5zM50 235h10v5h-10zM70 235h5v5h-5zM50 240h5v5h-5zM75 245h5v5h-5zM115 250h10v5h-10zM55 255h5v5h-5zM15 260h5v5h-5zM80 260h5v5h-5zM120 260h5v5h-5zM20 265h5v5h-5zM55 265h5v5h-5zM85 265h5v5h-5zM125 265h5v5h-5zM85 270h5v5h-5zM130 270h5v5h-5zM15 275h5v5h-5zM90 275h5v5h-5zM135 275h5v5h-5zM55 280h5v5h-5zM75 280h5v5h-5zM140 280h5v5h-5zM15 285h5v5h-5zM55 285h5v5h-5zM95 285h5v5h-5zM145 285h5v5h-5zM55 290h5v5h-5zM95 290h10v5h-10zM150 290h5v5h-5zM20 295h5v5h-5zM55 295h10v5h-10zM75 295h5v5h-5zM60 300h5v5h-5zM75 300h5v5h-5zM105 300h5v5h-5zM20 305h5v5h-5zM55 305h10v5h-10zM160 305h5v5h-5zM20 310h5v5h-5zM60 310h5v5h-5zM95 310h5v5h-5zM165 310h5v5h-5zM20 315h5v5h-5zM65 315h5v5h-5zM95 315h5v5h-5zM175 315h5v5h-5zM20 320h5v5h-5zM55 320h5v5h-5zM70 320h5v5h-5zM120 320h10v5h-10zM180 320h5v5h-5zM20 325h5v5h-5zM55 325h5v5h-5zM105 325h15v5h-15zM125 325h5v5h-5zM130 330h5v5h-5zM135 335h15v5h-15zM20 340h5v5h-5zM145 340h10v5h-10zM55 345h5v5h-5zM165 345h5v5h-5zM190 345h5v5h-5zM20 350h5v5h-5zM190 350h5v5h-5zM20 355h5v5h-5zM20 360h5v5h-5zM55 370h5v5h-5zM165 370h5v5h-5zM190 370h5v5h-5zM55 375h5v5h-5zM165 380h5v5h-5zM190 380h5v5h-5zM50 385h10v5h-10zM190 385h5v5h-5zM170 390h5v5h-5zM20 395h5v5h-5zM50 395h5v5h-5zM175 395h10v5h-10zM50 400h5v5h-5z"/>
<path fill="#212121" d="M50 5h5v5h-5zM20 10h5v5h-5zM50 10h5v5h-5zM50 20h5v5h-5zM20 25h5v5h-5zM50 25h5v5h-5zM20 30h5v5h-5zM50 30h5v5h-5zM50 35h5v5h-5zM50 40h5v5h-5zM55 45h5v5h-5zM55 50h5v5h-5zM55 55h5v5h-5zM20 65h5v5h-5zM55 65h5v5h-5zM20 75h5v5h-5zM55 75h5v5h-5zM20 80h5v5h-5zM50 85h5v5h-5zM50 90h5v5h-5zM70 90h5v5h-5zM85 90h5v5h-5zM20 95h5v5h-5zM50 95h5v5h-5zM20 100h5v5h-5zM20 105h5v5h-5zM20 110h5v5h-5zM50 110h5v5h-5zM90 110h5v5h-5zM20 115h5v5h-5zM50 115h5v5h-5zM50 120h5v5h-5zM90 120h5v5h-5zM50 125h5v5h-5zM65 125h5v5h-5zM20 130h5v5h-5zM65 130h5v5h-5zM90 130h5v5h-5zM20 135h5v5h-5zM50 135h5v5h-5zM60 135h10v5h-10zM90 135h5v5h-5zM50 140h5v5h-5zM65 140h5v5h-5zM90 140h5v5h-5zM20 145h5v5h-5zM50 145h5v5h-5zM65 145h5v5h-5zM20 150h5v5h-5zM65 150h5v5h-5zM90 150h5v5h-5zM20 155h5v5h-5zM50 155h5v5h-5zM60 155h10v5h-10zM90 155h5v5h-5zM20 160h5v5h-5zM50 160h5v5h-5zM90 160h5v5h-5zM5 165h5v5h-5zM50 165h5v5h-5zM65 165h5v5h-5zM20 170h5v5h-5zM50 175h5v5h-5zM65 175h5v5h-5zM90 175h5v5h-5zM20 180h5v5h-5zM90 180h5v5h-5zM65 185h5v5h-5zM90 185h5v5h-5zM20 190h5v5h-5zM90 190h5v5h-5zM20 195h5v5h-5zM20 200h5v5h-5zM90 200h5v5h-5zM50 205h5v5h-5zM65 205h5v5h-5zM90 205h5v5h-5zM20 210h5v5h-5zM50 210h5v5h-5zM65 210h5v5h-5zM50 215h5v5h-5zM100 215h5v5h-5zM20 220h5v5h-5zM50 220h5v5h-5zM105 220h5v5h-5zM20 225h5v5h-5zM50 230h5v5h-5zM70 230h5v5h-5zM20 235h5v5h-5zM110 235h5v5h-5zM20 240h5v5h-5zM75 240h5v5h-5zM20 245h5v5h-5zM50 245h5v5h-5zM50 250h5v5h-5zM20 255h5v5h-5zM50 255h5v5h-5zM80 255h5v5h-5zM115 255h10v5h-10zM20 260h5v5h-5zM50 260h5v5h-5zM60 260h5v5h-5zM85 260h5v5h-5zM50 265h5v5h-5zM70 265h5v5h-5zM20 270h5v5h-5zM50 270h10v5h-10zM90 270h5v5h-5zM20 275h5v5h-5zM55 275h5v5h-5zM20 280h5v5h-5zM50 280h5v5h-5zM20 285h5v5h-5zM140 285h5v5h-5zM20 290h5v5h-5zM50 290h5v5h-5zM60 290h5v5h-5zM75 290h5v5h-5zM145 290h5v5h-5zM150 295h5v5h-5zM20 300h5v5h-5zM50 300h5v5h-5zM155 300h5v5h-5zM50 305h5v5h-5zM65 305h5v5h-5zM75 305h5v5h-5zM75 315h5v5h-5zM165 315h5v5h-5zM175 320h5v5h-5zM130 325h5v5h-5zM50 330h5v5h-5zM135 330h5v5h-5zM185 330h5v5h-5zM50 335h5v5h-5zM155 340h15v5h-15zM20 345h5v5h-5zM50 350h5v5h-5zM190 355h5v5h-5zM190 360h5v5h-5zM20 365h5v5h-5zM50 365h5v5h-5zM50 370h5v5h-5zM50 375h5v5h-5zM50 380h5v5h-5zM20 385h5v5h-5zM50 390h5v5h-5zM185 390h5v5h-5zM25 400h5v5h-5z"/>
<path fill="#222222" d="M20 0h5v5h-5zM20 5h5v5h-5zM20 15h5v5h-5zM20 20h5v5h-5zM20 35h5v5h-5zM20 40h5v5h-5zM20 45h5v5h-5zM20 50h5v5h-5zM20 55h5v5h-5zM20 60h5v5h-5zM55 60h5v5h-5zM20 70h5v5h-5zM85 95h5v5h-5zM50 100h5v5h-5zM50 105h5v5h-5zM20 120h5v5h-5zM20 125h5v5h-5zM90 145h5v5h-5zM65 160h5v5h-5zM90 165h5v5h-5zM45 170h5v5h-5zM65 170h5v5h-5zM90 170h5v5h-5zM45 175h5v5h-5zM65 180h5v5h-5zM65 190h5v5h-5zM65 195h5v5h-5zM90 195h5v5h-5zM65 200h5v5h-5zM20 205h5v5h-5zM45 210h5v5h-5zM20 215h5v5h-5zM45 220h5v5h-5zM70 225h5v5h-5zM105 225h5v5h-5zM20 230h5v5h-5zM75 235h5v5h-5zM110 240h5v5h-5zM20 250h5v5h-5zM80 250h5v5h-5zM70 270h5v5h-5zM50 275h5v5h-5zM70 275h5v5h-5zM95 275h5v5h-5zM130 275h5v5h-5zM70 280h5v5h-5zM95 280h5v5h-5zM135 280h5v5h-5zM50 285h5v5h-5zM60 285h5v5h-5zM100 285h5v5h-5zM50 295h5v5h-5zM105 295h5v5h-5zM65 300h5v5h-5zM110 300h5v5h-5zM100 305h5v5h-5zM50 310h5v5h-5zM65 310h5v5h-5zM50 315h5v5h-5zM70 315h5v5h-5zM120 315h5v5h-5zM50 320h5v5h-5zM170 320h5v5h-5zM25 325h5v5h-5zM50 325h5v5h-5zM160 335h10v5h-10zM50 340h5v5h-5zM50 345h5v5h-5zM50 355h5v5h-5zM25 360h5v5h-5zM50 360h5v5h-5zM190 365h5v5h-5zM20 380h5v5h-5zM25 385h5v5h-5zM25 395h5v5h-5z"/>
<path fill="#232323" d="M45 10h5v5h-5zM50 45h5v5h-5zM50 80h5v5h-5zM80 90h5v5h-5zM45 125h5v5h-5zM25 135h5v5h-5zM25 140h5v5h-5zM45 140h5v5h-5zM25 145h5v5h-5zM45 150h5v5h-5zM25 155h5v5h-5zM45 155h5v5h-5zM5 160h5v5h-5zM25 160h5v5h-5zM0 165h5v5h-5zM45 180h5v5h-5zM25 185h5v5h-5zM45 185h5v5h-5zM25 190h5v5h-5zM25 195h5v5h-5zM25 200h5v5h-5zM45 200h5v5h-5zM95 215h5v5h-5zM25 220h5v5h-5zM70 220h5v5h-5zM100 220h5v5h-5zM25 225h5v5h-5zM45 225h5v5h-5zM45 230h5v5h-5zM45 235h5v5h-5zM25 240h5v5h-5zM25 245h5v5h-5zM80 245h5v5h-5zM110 245h5v5h-5zM45 250h5v5h-5zM60 265h10v5h-10zM90 265h5v5h-5zM125 270h5v5h-5zM45 275h5v5h-5zM60 275h5v5h-5zM25 280h5v5h-5zM60 280h5v5h-5zM25 285h5v5h-5zM70 285h5v5h-5zM25 290h5v5h-5zM105 290h5v5h-5zM25 295h5v5h-5zM65 295h10v5h-10zM25 300h5v5h-5zM70 300h5v5h-5zM150 300h5v5h-5zM25 305h5v5h-5zM70 305h5v5h-5zM110 305h10v5h-10zM155 305h5v5h-5zM25 310h5v5h-5zM75 310h5v5h-5zM115 310h10v5h-10zM160 310h5v5h-5zM25 315h5v5h-5zM125 315h5v5h-5zM25 320h5v5h-5zM115 320h5v5h-5zM170 325h5v5h-5zM180 325h5v5h-5zM25 330h5v5h-5zM140 330h5v5h-5zM25 335h5v5h-5zM185 335h5v5h-5zM25 340h5v5h-5zM25 345h5v5h-5zM25 355h5v5h-5zM25 365h5v5h-5zM20 370h5v5h-5zM25 390h5v5h-5zM175 390h10v5h-10z"/>
<path fill="#242424" d="M45 0h5v5h-5zM45 5h5v5h-5zM45 15h5v5h-5zM45 20h5v5h-5zM45 35h5v5h-5zM50 70h5v5h-5zM50 75h5v5h-5zM25 85h5v5h-5zM25 90h5v5h-5zM45 90h5v5h-5zM45 95h5v5h-5zM25 100h5v5h-5zM45 100h5v5h-5zM85 100h5v5h-5zM25 105h5v5h-5zM85 105h5v5h-5zM25 110h5v5h-5zM25 115h5v5h-5zM25 120h5v5h-5zM45 120h5v5h-5zM25 125h5v5h-5zM25 130h5v5h-5zM45 130h5v5h-5zM45 135h5v5h-5zM45 145h5v5h-5zM25 150h5v5h-5zM45 160h5v5h-5zM25 165h5v5h-5zM45 165h5v5h-5zM25 170h5v5h-5zM25 175h5v5h-5zM25 180h5v5h-5zM45 190h5v5h-5zM45 195h5v5h-5zM25 205h5v5h-5zM45 205h5v5h-5zM25 210h5v5h-5zM90 210h5v5h-5zM25 215h5v5h-5zM45 215h5v5h-5zM25 230h5v5h-5zM75 230h5v5h-5zM105 230h5v5h-5zM45 240h5v5h-5zM45 245h5v5h-5zM25 250h5v5h-5zM110 250h5v5h-5zM25 255h5v5h-5zM45 255h5v5h-5zM85 255h5v5h-5zM25 260h5v5h-5zM45 260h5v5h-5zM25 265h5v5h-5zM45 265h5v5h-5zM120 265h5v5h-5zM25 270h5v5h-5zM45 270h5v5h-5zM60 270h5v5h-5zM25 275h5v5h-5zM45 280h5v5h-5zM65 280h5v5h-5zM45 285h5v5h-5zM65 285h5v5h-5zM45 290h5v5h-5zM65 290h10v5h-10zM45 295h5v5h-5zM45 300h5v5h-5zM45 305h5v5h-5zM105 305h5v5h-5zM70 310h5v5h-5zM105 320h5v5h-5zM130 320h5v5h-5zM165 320h5v5h-5zM175 325h5v5h-5zM165 330h5v5h-5zM180 330h5v5h-5zM150 335h5v5h-5zM45 340h5v5h-5zM170 340h5v5h-5zM185 340h5v5h-5zM45 345h5v5h-5zM170 345h5v5h-5zM25 350h5v5h-5zM170 350h5v5h-5zM20 375h5v5h-5zM170 380h5v5h-5zM170 385h5v5h-5zM185 385h5v5h-5zM30 400h5v5h-5zM45 400h5v5h-5z"/>
<path fill="#252525" d="M25 0h5v5h-5zM25 5h5v5h-5zM25 10h5v5h-5zM25 15h5v5h-5zM25 20h5v5h-5zM25 25h5v5h-5zM45 25h5v5h-5zM45 30h5v5h-5zM25 40h5v5h-5zM45 40h5v5h-5zM25 45h5v5h-5zM25 50h5v5h-5zM50 50h5v5h-5zM50 60h5v5h-5zM50 65h5v5h-5zM25 75h5v5h-5zM25 80h5v5h-5zM45 85h5v5h-5zM75 90h5v5h-5zM25 95h5v5h-5zM45 105h5v5h-5zM45 110h5v5h-5zM45 115h5v5h-5zM40 160h5v5h-5zM40 170h5v5h-5zM40 175h5v5h-5zM40 190h5v5h-5zM40 205h5v5h-5zM40 210h5v5h-5zM25 235h5v5h-5zM105 235h5v5h-5zM65 275h5v5h-5zM100 280h5v5h-5zM140 290h5v5h-5zM110 295h5v5h-5zM145 295h5v5h-5zM30 305h5v5h-5zM45 310h5v5h-5zM100 315h5v5h-5zM30 325h5v5h-5zM135 325h5v5h-5zM165 325h5v5h-5zM30 330h5v5h-5zM45 330h5v5h-5zM170 330h5v5h-5zM30 335h5v5h-5zM45 335h5v5h-5zM155 335h5v5h-5zM45 355h5v5h-5zM170 355h5v5h-5zM45 365h5v5h-5zM45 370h5v5h-5zM170 370h5v5h-5zM170 375h5v5h-5zM25 380h5v5h-5zM45 380h5v5h-5zM185 380h5v5h-5zM45 385h5v5h-5zM45 390h5v5h-5zM45 395h5v5h-5z"/>
<path fill="#262626" d="M25 30h5v5h-5zM25 35h5v5h-5zM25 55h5v5h-5zM25 60h5v5h-5zM25 65h5v5h-5zM25 70h5v5h-5zM70 95h5v5h-5zM30 110h5v5h-5zM85 110h5v5h-5zM40 135h5v5h-5zM30 145h5v5h-5zM40 145h5v5h-5zM30 150h5v5h-5zM40 150h5v5h-5zM30 155h5v5h-5zM40 155h5v5h-5zM0 160h5v5h-5zM30 160h5v5h-5zM30 165h5v5h-5zM40 165h5v5h-5zM30 170h5v5h-5zM30 175h5v5h-5zM30 180h5v5h-5zM40 180h5v5h-5zM30 185h5v5h-5zM40 185h5v5h-5zM30 190h5v5h-5zM30 195h5v5h-5zM40 195h5v5h-5zM30 200h5v5h-5zM40 200h5v5h-5zM40 215h5v5h-5zM70 215h5v5h-5zM30 220h5v5h-5zM40 225h5v5h-5zM100 225h5v5h-5zM40 235h5v5h-5zM40 240h5v5h-5zM80 240h5v5h-5zM40 245h5v5h-5zM40 250h5v5h-5zM40 260h5v5h-5zM115 260h5v5h-5zM40 265h5v5h-5zM30 270h5v5h-5zM65 270h5v5h-5zM30 285h5v5h-5zM135 285h5v5h-5zM30 300h5v5h-5zM40 300h5v5h-5zM30 315h5v5h-5zM30 320h5v5h-5zM175 330h5v5h-5zM170 335h5v5h-5zM180 335h5v5h-5zM30 340h5v5h-5zM185 345h5v5h-5zM45 350h5v5h-5zM45 360h5v5h-5zM170 360h5v5h-5zM170 365h5v5h-5zM45 375h5v5h-5zM185 375h5v5h-5zM30 395h5v5h-5zM35 400h10v5h-10z"/>
<path fill="#272727" d="M30 0h5v5h-5zM40 0h5v5h-5zM40 10h5v5h-5zM40 35h5v5h-5zM45 45h5v5h-5zM50 55h5v5h-5zM45 80h5v5h-5zM30 85h5v5h-5zM30 90h5v5h-5zM40 90h5v5h-5zM30 95h5v5h-5zM40 95h5v5h-5zM70 100h5v5h-5zM40 105h5v5h-5zM30 115h5v5h-5zM40 115h5v5h-5zM30 120h5v5h-5zM30 125h5v5h-5zM40 125h5v5h-5zM30 130h5v5h-5zM40 130h5v5h-5zM30 135h5v5h-5zM30 140h15v5h-15zM35 150h5v5h-5zM35 155h5v5h-5zM35 160h5v5h-5zM35 165h5v5h-5zM35 170h5v5h-5zM35 175h5v5h-5zM35 185h5v5h-5zM35 190h5v5h-5zM35 195h5v5h-5zM35 200h5v5h-5zM30 205h5v5h-5zM30 210h10v5h-10zM30 215h5v5h-5zM35 220h10v5h-10zM30 225h5v5h-5zM30 230h5v5h-5zM40 230h5v5h-5zM30 235h5v5h-5zM30 240h10v5h-10zM105 240h5v5h-5zM30 250h10v5h-10zM30 255h5v5h-5zM40 255h5v5h-5zM30 260h10v5h-10zM30 265h5v5h-5zM40 270h5v5h-5zM95 270h5v5h-5zM30 275h5v5h-5zM30 280h5v5h-5zM40 280h5v5h-5zM130 280h5v5h-5zM40 285h5v5h-5zM30 290h5v5h-5zM40 290h5v5h-5zM30 295h5v5h-5zM115 300h5v5h-5zM30 310h5v5h-5zM100 310h5v5h-5zM115 315h5v5h-5zM35 335h10v5h-10zM40 340h5v5h-5zM30 345h5v5h-5zM185 350h5v5h-5zM30 355h5v5h-5zM25 370h5v5h-5zM185 370h5v5h-5zM30 385h5v5h-5z"/>
<path fill="#282828" d="M30 5h5v5h-5zM40 5h5v5h-5zM30 10h5v5h-5zM30 15h5v5h-5zM40 15h5v5h-5zM30 20h5v5h-5zM40 20h5v5h-5zM40 25h5v5h-5zM30 30h5v5h-5zM40 30h5v5h-5zM30 40h5v5h-5zM45 75h5v5h-5zM40 85h5v5h-5zM30 100h5v5h-5zM40 100h5v5h-5zM30 105h10v5h-10zM70 105h5v5h-5zM40 110h5v5h-5zM85 115h5v5h-5zM35 120h10v5h-10zM85 120h5v5h-5zM35 135h5v5h-5zM35 145h5v5h-5zM35 180h5v5h-5zM35 205h5v5h-5zM35 215h5v5h-5zM35 225h5v5h-5zM35 230h5v5h-5zM35 235h5v5h-5zM30 245h5v5h-5zM35 255h5v5h-5zM35 265h5v5h-5zM35 270h5v5h-5zM35 275h10v5h-10zM35 280h5v5h-5zM35 285h5v5h-5zM35 290h5v5h-5zM35 295h10v5h-10zM35 300h5v5h-5zM35 305h10v5h-10zM35 310h5v5h-5zM110 310h5v5h-5zM160 315h5v5h-5zM110 320h5v5h-5zM35 330h10v5h-10zM35 340h5v5h-5zM30 350h5v5h-5zM185 355h5v5h-5zM30 360h5v5h-5zM30 365h5v5h-5zM30 390h5v5h-5z"/>
<path fill="#292929" d="M35 0h5v5h-5zM35 5h5v5h-5zM35 10h5v5h-5zM35 15h5v5h-5zM35 20h5v5h-5zM30 25h5v5h-5zM30 35h5v5h-5zM40 40h5v5h-5zM45 70h5v5h-5zM30 75h5v5h-5zM30 80h5v5h-5zM35 90h5v5h-5zM35 95h5v5h-5zM35 100h5v5h-5zM35 110h5v5h-5zM70 110h5v5h-5zM35 115h5v5h-5zM35 125h5v5h-5zM35 130h5v5h-5zM70 210h5v5h-5zM95 220h5v5h-5zM35 245h5v5h-5zM125 275h5v5h-5zM120 305h5v5h-5zM125 310h5v5h-5zM45 315h5v5h-5zM35 325h5v5h-5zM45 325h5v5h-5zM175 335h5v5h-5zM175 340h10v5h-10zM175 345h5v5h-5zM185 365h5v5h-5zM175 385h5v5h-5zM35 395h5v5h-5z"/>
<path fill="#2a2a2a" d="M35 25h5v5h-5zM35 30h5v5h-5zM35 35h5v5h-5zM35 40h5v5h-5zM30 45h5v5h-5zM45 50h5v5h-5zM45 65h5v5h-5zM40 80h5v5h-5zM35 85h5v5h-5zM85 125h5v5h-5zM80 235h5v5h-5zM85 250h5v5h-5zM110 255h5v5h-5zM90 260h5v5h-5zM40 310h5v5h-5zM35 320h5v5h-5zM45 320h5v5h-5zM40 345h5v5h-5zM185 360h5v5h-5zM30 370h5v5h-5zM25 375h5v5h-5zM180 385h5v5h-5zM40 390h5v5h-5zM40 395h5v5h-5z"/>
<path fill="#2b2b2b" d="M40 45h5v5h-5zM30 50h5v5h-5zM30 60h5v5h-5zM30 70h5v5h-5zM40 75h5v5h-5zM35 80h5v5h-5zM70 115h5v5h-5zM85 190h5v5h-5zM75 225h5v5h-5zM105 245h5v5h-5zM105 285h5v5h-5zM155 310h5v5h-5zM35 315h5v5h-5zM130 315h5v5h-5zM145 330h5v5h-5zM35 345h5v5h-5zM180 345h5v5h-5zM40 350h5v5h-5zM40 355h5v5h-5zM40 360h5v5h-5zM40 365h5v5h-5zM40 370h5v5h-5zM40 375h5v5h-5zM30 380h5v5h-5zM40 380h5v5h-5zM175 380h10v5h-10zM40 385h5v5h-5z"/>
<path fill="#2c2c2c" d="M30 55h5v5h-5zM45 60h5v5h-5zM30 65h5v5h-5zM40 70h5v5h-5zM70 120h5v5h-5zM85 135h5v5h-5zM70 140h5v5h-5zM70 150h5v5h-5zM85 150h5v5h-5zM70 160h5v5h-5zM85 160h5v5h-5zM70 170h5v5h-5zM85 170h5v5h-5zM70 175h5v5h-5zM70 180h5v5h-5zM85 180h5v5h-5zM70 185h5v5h-5zM85 185h5v5h-5zM70 190h5v5h-5zM70 195h5v5h-5zM85 195h5v5h-5zM85 200h5v5h-5zM120 270h5v5h-5zM105 315h5v5h-5zM160 330h5v5h-5zM175 350h5v5h-5zM35 355h5v5h-5zM175 375h5v5h-5zM35 390h5v5h-5z"/>
<path fill="#2d2d2d" d="M35 45h5v5h-5zM45 55h5v5h-5zM35 75h5v5h-5zM70 125h5v5h-5zM70 130h5v5h-5zM85 130h5v5h-5zM85 140h5v5h-5zM70 145h5v5h-5zM85 145h5v5h-5zM70 155h5v5h-5zM85 155h5v5h-5zM70 165h5v5h-5zM85 165h5v5h-5zM85 175h5v5h-5zM70 200h5v5h-5zM70 205h5v5h-5zM150 305h5v5h-5zM105 310h5v5h-5zM40 325h5v5h-5zM35 350h5v5h-5zM175 355h5v5h-5zM35 360h5v5h-5zM35 365h5v5h-5zM35 380h5v5h-5zM35 385h5v5h-5z"/>
<path fill="#2e2e2e" d="M35 50h10v5h-10zM40 65h5v5h-5zM35 70h5v5h-5zM80 95h5v5h-5zM70 135h5v5h-5zM85 205h5v5h-5zM90 215h5v5h-5zM100 230h5v5h-5zM110 315h5v5h-5zM40 320h5v5h-5zM180 350h5v5h-5zM35 370h5v5h-5zM175 370h5v5h-5zM35 375h5v5h-5zM180 375h5v5h-5z"/>
<path fill="#2f2f2f" d="M35 65h5v5h-5zM75 95h5v5h-5zM40 315h5v5h-5zM135 320h5v5h-5zM175 365h5v5h-5zM180 370h5v5h-5zM30 375h5v5h-5z"/>
<path fill="#303030" d="M100 275h5v5h-5zM110 290h5v5h-5zM180 355h5v5h-5z"/>
<path fill="#313131" d="M35 55h10v5h-10zM35 60h10v5h-10zM80 100h5v5h-5zM145 300h5v5h-5zM175 360h5v5h-5z"/>
<path fill="#323232" d="M75 100h5v5h-5zM140 325h5v5h-5zM180 365h5v5h-5z"/>
<path fill="#333333" d="M80 105h5v5h-5zM85 245h5v5h-5zM115 265h5v5h-5zM140 295h5v5h-5zM180 360h5v5h-5z"/>
<path fill="#353535" d="M75 220h5v5h-5zM95 265h5v5h-5zM135 290h5v5h-5z"/>
<path fill="#363636" d="M75 105h5v5h-5zM160 320h5v5h-5z"/>
<path fill="#373737" d="M80 110h5v5h-5zM85 210h5v5h-5zM105 250h5v5h-5zM115 295h5v5h-5z"/>
<path fill="#383838" d="M75 110h5v5h-5zM80 230h5v5h-5zM90 255h5v5h-5zM130 285h5v5h-5zM150 330h5v5h-5z"/>
<path fill="#3a3a3a" d="M100 235h5v5h-5zM110 260h5v5h-5zM105 280h5v5h-5z"/>
<path fill="#3b3b3b" d="M80 115h5v5h-5zM160 325h5v5h-5z"/>
<path fill="#3c3c3c" d="M75 115h5v5h-5zM125 280h5v5h-5zM155 330h5v5h-5z"/>
<path fill="#3e3e3e" d="M80 120h5v5h-5zM75 215h5v5h-5zM120 300h5v5h-5z"/>
<path fill="#3f3f3f" d="M75 120h5v5h-5zM95 225h5v5h-5zM85 240h5v5h-5zM155 315h5v5h-5z"/>
<path fill="#404040" d="M125 305h5v5h-5z"/>
<path fill="#414141" d="M120 275h5v5h-5z"/>
<path fill="#424242" d="M75 125h10v5h-10z"/>
<path fill="#434343" d="M100 270h5v5h-5zM130 310h5v5h-5z"/>
<path fill="#444444" d="M80 165h5v5h-5zM75 180h10v5h-10zM80 185h5v5h-5zM75 190h10v5h-10zM75 195h10v5h-10zM75 200h5v5h-5zM80 205h5v5h-5zM75 210h5v5h-5zM105 255h5v5h-5z"/>
<path fill="#454545" d="M75 130h10v5h-10zM80 150h5v5h-5zM75 155h10v5h-10zM75 160h10v5h-10zM75 165h5v5h-5zM75 170h10v5h-10zM75 175h10v5h-10zM75 185h5v5h-5zM80 200h5v5h-5zM75 205h5v5h-5zM95 260h5v5h-5z"/>
<path fill="#464646" d="M75 135h5v5h-5zM75 140h10v5h-10zM75 145h10v5h-10zM75 150h5v5h-5z"/>
<path fill="#474747" d="M80 135h5v5h-5zM90 220h5v5h-5zM150 310h5v5h-5z"/>
<path fill="#484848" d="M110 285h5v5h-5zM145 325h5v5h-5z"/>
<path fill="#494949" d="M85 215h5v5h-5zM100 240h5v5h-5z"/>
<path fill="#4a4a4a" d="M80 210h5v5h-5zM115 270h5v5h-5zM135 315h5v5h-5z"/>
<path fill="#4d4d4d" d="M145 305h5v5h-5z"/>
<path fill="#4e4e4e" d="M85 235h5v5h-5zM90 250h5v5h-5z"/>
<path fill="#4f4f4f" d="M80 215h5v5h-5zM80 225h5v5h-5zM110 265h5v5h-5zM105 275h5v5h-5zM155 325h5v5h-5z"/>
<path fill="#505050" d="M100 265h5v5h-5zM140 320h5v5h-5zM155 320h5v5h-5z"/>
<path fill="#525252" d="M100 245h5v5h-5zM105 260h5v5h-5zM115 290h5v5h-5z"/>
<path fill="#535353" d="M100 260h5v5h-5zM150 325h5v5h-5z"/>
<path fill="#545454" d="M140 300h5v5h-5z"/>
<path fill="#555555" d="M80 220h5v5h-5z"/>
<path fill="#565656" d="M95 255h5v5h-5z"/>
<path fill="#575757" d="M135 295h5v5h-5z"/>
<path fill="#585858" d="M100 250h5v5h-5zM100 255h5v5h-5z"/>
<path fill="#595959" d="M105 265h5v5h-5zM130 290h5v5h-5z"/>
<path fill="#5a5a5a" d="M105 270h5v5h-5z"/>
<path fill="#5b5b5b" d="M110 280h5v5h-5z"/>
<path fill="#5c5c5c" d="M95 230h5v5h-5z"/>
<path fill="#5d5d5d" d="M110 270h5v5h-5zM120 280h5v5h-5zM125 285h5v5h-5z"/>
<path fill="#5e5e5e" d="M90 245h5v5h-5zM115 275h5v5h-5zM120 295h5v5h-5z"/>
<path fill="#5f5f5f" d="M85 220h5v5h-5z"/>
<path fill="#606060" d="M110 275h5v5h-5z"/>
<path fill="#616161" d="M85 230h5v5h-5z"/>
<path fill="#626262" d="M90 225h5v5h-5zM125 300h5v5h-5z"/>
<path fill="#636363" d="M95 250h5v5h-5z"/>
<path fill="#646464" d="M115 285h5v5h-5zM150 320h5v5h-5z"/>
<path fill="#656565" d="M150 315h5v5h-5z"/>
<path fill="#666666" d="M115 280h5v5h-5zM130 305h5v5h-5z"/>
<path fill="#676767" d="M85 225h5v5h-5z"/>
<path fill="#686868" d="M95 235h5v5h-5z"/>
<path fill="#696969" d="M135 310h5v5h-5z"/>
<path fill="#6a6a6a" d="M90 240h5v5h-5zM95 245h5v5h-5zM120 285h5v5h-5z"/>
<path fill="#6b6b6b" d="M145 310h5v5h-5z"/>
<path fill="#6c6c6c" d="M120 290h5v5h-5zM140 315h5v5h-5z"/>
<path fill="#6e6e6e" d="M95 240h5v5h-5zM145 320h5v5h-5z"/>
<path fill="#6f6f6f" d="M90 230h5v5h-5zM90 235h5v5h-5zM130 295h5v5h-5zM135 300h5v5h-5zM140 305h5v5h-5z"/>
<path fill="#707070" d="M125 290h5v5h-5z"/>
<path fill="#727272" d="M125 295h5v5h-5z"/>
<path fill="#737373" d="M130 300h5v5h-5zM140 310h5v5h-5zM145 315h5v5h-5z"/>
<path fill="#757575" d="M135 305h5v5h-5z"/>
<path d="M70.5 110.5 L75.5 105.5 L85.5 109.5 L85.5 115.5 L90.5 120.5 L90.5 215.5 L105.5 230.5 L105.5 255.5 L110.5 260.5 L110.5 265.5 L155.5 310.5 L155.5 320.5 L160.5 325.5 L160.5 330.5 L145.5 330.5 L115.5 300.5 L115.5 295.5 L105.5 285.5 L105.5 275.5 L100.5 270.5 L100.5 265.5 L95.5 260.5 L95.5 255.5 L90.5 250.5 L90.5 240.5 L85.5 235.5 L80.5 235.5 L80.5 220.5 L75.5 215.5 L75.5 195.5 L70.5 190.5Z" fill="none" stroke="#0000ff" stroke-width="1"/>
</svg>
<svg class="a" style="left:366px;top:390px" width="18" height="18" viewBox="366 390 18 18" shape-rendering="crispEdges"><path d="M372.5 392.5H377.5L379.5 394.5L380.5 395.5L381.5 397.5V400.5L380.5 402.5L377.5 405.5H372.5L368.5 401.5V396.5Z" fill="none" stroke="#ececec" stroke-width="1"/></svg><!--/IMG-->
<!-- buttons -->
<div class="btn" style="left:619px;top:38px;width:80px;height:23px;border-color:#000;box-shadow:inset 1px 1px 0 #fff,inset -1px -1px 0 #000,inset -2px -2px 0 #808080"></div>
<div class="btn" style="left:619px;top:67px;width:80px;height:23px"></div>
<div class="btn" style="left:619px;top:95px;width:80px;height:23px"></div>
<div class="btn" style="left:619px;top:124px;width:80px;height:23px"></div>
<span class="t" id="ok" style="left:652.17px;top:41px;transform:scaleX(0.7686)">OK</span>
<span class="t" id="cancel" style="left:643.15px;top:70px;transform:scaleX(0.7964)">Cancel</span>
<span class="t" id="segment" style="left:638.20px;top:99px;transform:scaleX(0.8039)">Segment</span>
<span class="t" id="reset" style="left:645.18px;top:128px;transform:scaleX(0.8182)">Reset</span>
<!-- autostart -->
<div class="sunk2" style="left:619px;top:164px;width:13px;height:13px"></div>
<span class="t" id="auto" style="left:637.00px;top:163px;transform:scaleX(0.8077)">Autostart</span>
<!-- group 1 -->
<div class="grp" style="left:579px;top:205px;width:161px;height:66px"></div>
<div class="a lbl" style="left:586px;top:200px;width:62px;height:12px"></div>
<span class="t" id="toolopt" style="left:589.00px;top:198px;transform:scaleX(0.8261)">Tool options</span>
<span class="t" id="brush" style="left:597.23px;top:220px;transform:scaleX(0.7742)">Brush size:</span>
<div class="sunk2" style="left:654px;top:216px;width:26px;height:24px"></div>
<span class="t" id="three" style="left:658.14px;top:218px;transform:scaleX(0.6944)">3</span>
<!-- group 2 -->
<div class="grp" style="left:579px;top:296px;width:161px;height:117px"></div>
<div class="a lbl" style="left:586px;top:291px;width:42px;height:12px"></div>
<span class="t" id="preview" style="left:588.18px;top:289px;transform:scaleX(0.8222)">Preview</span>
<span class="t" id="show" style="left:621.18px;top:311px;transform:scaleX(0.8235)">Show:</span>
<span class="t" id="display" style="left:614.20px;top:339px;transform:scaleX(0.7955)">Display:</span>
<div class="sunk2" style="left:657px;top:309px;width:77px;height:21px"></div>
<div class="sunk2" style="left:657px;top:337px;width:77px;height:21px"></div>
<div class="btn b2" style="left:716px;top:311px;width:16px;height:17px"></div>
<div class="btn b2" style="left:716px;top:339px;width:16px;height:17px"></div>
<span class="t" id="orig" style="left:662.19px;top:312px;transform:scaleX(0.7758)">original</span>
<span class="t" id="adapt" style="left:662.17px;top:340px;transform:scaleX(0.8130)">adaptive</span>
<div class="sunk2" style="left:594px;top:367px;width:13px;height:13px"></div>
<div class="sunk2" style="left:594px;top:388px;width:13px;height:13px"></div>
<span class="t" id="invert" style="left:612.18px;top:366px;transform:scaleX(0.8182)">Invert mask</span>
<span class="t" id="contour" style="left:612.18px;top:387px;transform:scaleX(0.8230)">Show contour</span>
<!-- icon buttons -->
<div class="btn" style="left:624px;top:421px;width:32px;height:31px"></div>
<div class="btn" style="left:663px;top:421px;width:32px;height:31px"></div>
<div class="btn" style="left:624px;top:460px;width:32px;height:31px"></div>
<div class="btn" style="left:663px;top:460px;width:32px;height:31px"></div>
<!-- toolbar -->
<div class="a" style="left:13px;top:80px;width:24px;height:21px;background:#fff;box-sizing:border-box;border:1px solid;border-color:#808080 #fff #fff #808080"></div>
<div class="a" style="left:12px;top:165px;width:24px;height:1px;background:#808080"></div>
<div class="a" style="left:12px;top:166px;width:24px;height:1px;background:#fff"></div>

<!-- checkmarks -->
<svg class="a" style="left:622px;top:167px" width="7" height="7" shape-rendering="crispEdges"><path d="M0 2v3h1v1h1v1h1v-1h1v-1h1v-1h1v-1h1v-3h-1v1h-1v1h-1v1h-1v1h-1v-1h-1v-1z" fill="#000"/></svg>
<svg class="a" style="left:597px;top:391px" width="7" height="7" shape-rendering="crispEdges"><path d="M0 2v3h1v1h1v1h1v-1h1v-1h1v-1h1v-1h1v-3h-1v1h-1v1h-1v1h-1v1h-1v-1h-1v-1z" fill="#000"/></svg>
<!-- combo arrows -->
<svg class="a" style="left:720px;top:317px" width="7" height="4" shape-rendering="crispEdges"><path d="M0 0h7v1h-1v1h-1v1h-1v1h-1v-1h-1v-1h-1v-1h-1z" fill="#000"/></svg>
<svg class="a" style="left:720px;top:345px" width="7" height="4" shape-rendering="crispEdges"><path d="M0 0h7v1h-1v1h-1v1h-1v1h-1v-1h-1v-1h-1v-1h-1z" fill="#000"/></svg>
<!-- slider -->
<div class="a" style="left:599px;top:251px;width:128px;height:1px;background:#808080"></div>
<div class="a" style="left:599px;top:252px;width:127px;height:1px;background:#000"></div>
<div class="a" style="left:600px;top:253px;width:127px;height:2px;background:#fff"></div>
<svg class="a" style="left:600px;top:248px" width="8" height="12" shape-rendering="crispEdges">
<path d="M1 1h5v8l-2.5 2.5l-2.5 -2.5z" fill="#d4d0c8"/>
<path d="M1 1h4v1h-3v7h-1z" fill="#fff"/>
<path d="M5 1h1v8h-1z" fill="#000"/><path d="M4 2h1v7h-1z" fill="#808080"/>
<path d="M1 9h1v1h-1zM2 10h1v1h-1z" fill="#fff"/><path d="M4 9h1v1h-1zM3 10h1v1h-1z" fill="#000"/>
</svg>
<!-- grip -->
<svg class="a" style="left:742px;top:566px" width="12" height="12" shape-rendering="crispEdges"><path d="M11 0h1v1h-1zM10 1h1v1h-1zM9 2h1v1h-1zM8 3h1v1h-1zM7 4h1v1h-1zM11 4h1v1h-1zM6 5h1v1h-1zM10 5h1v1h-1zM5 6h1v1h-1zM9 6h1v1h-1zM4 7h1v1h-1zM8 7h1v1h-1zM3 8h1v1h-1zM7 8h1v1h-1zM11 8h1v1h-1zM2 9h1v1h-1zM6 9h1v1h-1zM10 9h1v1h-1zM1 10h1v1h-1zM5 10h1v1h-1zM9 10h1v1h-1zM0 11h1v1h-1zM4 11h1v1h-1zM8 11h1v1h-1z" fill="#fff"/><path d="M11 1h1v1h-1zM10 2h1v1h-1zM11 2h1v1h-1zM9 3h1v1h-1zM10 3h1v1h-1zM8 4h1v1h-1zM9 4h1v1h-1zM7 5h1v1h-1zM8 5h1v1h-1zM11 5h1v1h-1zM6 6h1v1h-1zM7 6h1v1h-1zM10 6h1v1h-1zM11 6h1v1h-1zM5 7h1v1h-1zM6 7h1v1h-1zM9 7h1v1h-1zM10 7h1v1h-1zM4 8h1v1h-1zM5 8h1v1h-1zM8 8h1v1h-1zM9 8h1v1h-1zM3 9h1v1h-1zM4 9h1v1h-1zM7 9h1v1h-1zM8 9h1v1h-1zM11 9h1v1h-1zM2 10h1v1h-1zM3 10h1v1h-1zM6 10h1v1h-1zM7 10h1v1h-1zM10 10h1v1h-1zM11 10h1v1h-1zM1 11h1v1h-1zM2 11h1v1h-1zM5 11h1v1h-1zM6 11h1v1h-1zM9 11h1v1h-1zM10 11h1v1h-1z" fill="#808080"/></svg>

<!--ICONS-->
<svg class="a" style="left:0;top:76px" width="50" height="160" viewBox="0 76 50 160">
<!-- pencil -->
<g>
<path d="M17.2 98.8 L18.4 94.2 L28 84.6 Q29.8 83.2 31.2 84.6 Q32.8 86.2 31.2 87.8 L21.6 97.2 Z" fill="#dcdcdc"/>
<path d="M28.4 85.2 Q29.8 84.2 30.8 85.2 Q31.8 86.4 30.6 87.6 L29.8 88.4 L27.4 86 Z" fill="#fff"/>
<path d="M19.9 95.4 L26 89.3" stroke="#fff" stroke-width="1" fill="none"/>
<path d="M18.4 94.2 L28 84.6" stroke="#808080" stroke-width="1" fill="none"/>
<path d="M21.2 97.6 L31.2 87.6 Q32.8 86 31.3 84.6 Q29.8 83.3 28.2 84.5" stroke="#000" stroke-width="1.25" fill="none"/>
<path d="M26.6 85.6 L30.2 89.2 L28.8 90.6 L25.2 87 Z" fill="#606060"/>
<path d="M17 99 L17.8 96.2 L19.8 98.2 Z" fill="#000"/>
<path d="M18.4 94.2 L17.5 97.2 M21.4 97.6 L18.8 98.4" stroke="#404040" stroke-width="1" fill="none"/>
</g>
<!-- brush -->
<g>
<path d="M31.5 113.7 L24.2 121" stroke="#000" stroke-width="2.6" fill="none"/>
<path d="M30.9 113.4 L25.2 119.1" stroke="#fff" stroke-width="1.1" fill="none"/>
<path d="M22.4 119.6 L25.4 122.6 L23.2 125.2 L19.6 126.8 L16.2 126.6 L16.4 125.4 Z" fill="#3c3c3c"/>
<path d="M22.2 119.8 L16.4 125.6 L17.4 126.2 L23 120.6 Z" fill="#787878"/>
<path d="M16.6 126.6 L19.6 126.9 L23 125.4" stroke="#000" stroke-width="1" fill="none"/>
<path d="M22.6 119.4 L25.8 122.6" stroke="#000" stroke-width="1.5"/>
</g>
<!-- eraser (disabled) -->
<g shape-rendering="crispEdges">
<path d="M25 144 L33 144 L33 148 L26.5 155 L17 155 L17 153 Z" fill="#fff"/>
<path d="M24 143 L32 143 L32 147 L25.5 154 L16 154 L16 152 Z" fill="#808080"/>
</g>
<!-- zoom tool -->
<g>
<path d="M18.5 179.6 h5 l2 2 v5 l-2 2 h-5 l-2 -2 v-5 z" fill="#b9b99d" stroke="#000" stroke-width="1.5"/>
<path d="M25.4 188.4 L30.8 193.8" stroke="#000" stroke-width="2.2" fill="none"/>
</g>
<!-- hand -->
<g>
<path d="M18.6 211.6 Q19.8 209.6 21.2 211 L22.4 213.6 L22.6 210.4 Q24 208.6 25.4 210.2 L25.8 213.6 L26.4 211.2 Q27.8 209.8 29 211.4 L29.2 215 Q30.8 213.2 32 215 L31.6 219.6 L29 224.6 L22 224.8 L16.4 217.6 Q16 215.2 18.2 215.6 L20.4 217.8 L18.4 213 Z" fill="#fff" stroke="#808080" stroke-width="1"/>
<path d="M22.2 224.4 L20.4 221.6 L24 221.4 L28.4 218.4 L29.2 221.4 L28.2 224.4 Z" fill="#c0c0c0"/>
<path d="M31.2 219.2 L28.6 224.8" stroke="#000" stroke-width="1.5" stroke-dasharray="1.6 0.9"/>
<path d="M22.5 213 v4.6 M25.9 213 v4.6" stroke="#606060" stroke-width="1"/>
<path d="M29.2 214.6 v3.4" stroke="#808080" stroke-width="1"/>
<path d="M16.8 217.8 L21.6 224.2" stroke="#606060" stroke-width="1" fill="none"/>
<path d="M19.2 216.4 l1.1 1.1" stroke="#000" stroke-width="1.3"/>
</g>
</svg>
<svg class="a" style="left:620px;top:418px" width="80" height="76" viewBox="620 418 80 76">
<defs><radialGradient id="lens" cx="0.35" cy="0.35" r="0.75"><stop offset="0" stop-color="#ffffff"/><stop offset="0.6" stop-color="#e4e4e4"/><stop offset="1" stop-color="#b8b8b8"/></radialGradient></defs>
<!-- zoom out -->
<g>
<path d="M640.6 438.2 L645.1 442.7" stroke="#000080" stroke-width="3.2" stroke-linecap="round" fill="none"/>
<path d="M641.6 438.4 L645.4 442.2" stroke="#fff" stroke-width="0.8" stroke-dasharray="1 1" fill="none"/>
<circle cx="637" cy="434" r="5.4" fill="url(#lens)" stroke="#000" stroke-width="1.2" stroke-dasharray="1.6 0.6"/>
<rect x="634" y="433" width="6" height="2" fill="#000" shape-rendering="crispEdges"/>
</g>
<!-- zoom in -->
<g>
<path d="M679.6 438.2 L684.1 442.7" stroke="#000080" stroke-width="3.2" stroke-linecap="round" fill="none"/>
<path d="M680.6 438.4 L684.4 442.2" stroke="#fff" stroke-width="0.8" stroke-dasharray="1 1" fill="none"/>
<circle cx="676" cy="434" r="5.4" fill="url(#lens)" stroke="#000" stroke-width="1.2" stroke-dasharray="1.6 0.6"/>
<rect x="673" y="433" width="6" height="2" fill="#000" shape-rendering="crispEdges"/>
<rect x="675" y="431" width="2" height="6" fill="#000" shape-rendering="crispEdges"/>
</g>
<!-- undo -->
<g>
<path d="M633 473 L633 478 L638 478 Z" fill="#000080"/>
<path d="M636.6 475.2 Q639.4 472.5 641.6 472.5 Q644.9 472.5 644.9 475.5 Q644.9 477.6 643 478.6" stroke="#000080" stroke-width="1.2" fill="none"/>
</g>
<!-- redo -->
<g>
<path d="M685 473 L685 478 L680 478 Z" fill="#000080"/>
<path d="M681.4 475.2 Q678.6 472.5 676.4 472.5 Q673.3 472.5 673.3 475.5 Q673.3 477.6 675.2 478.6" stroke="#000080" stroke-width="1.2" fill="none"/>
</g>
</svg>
<!--/ICONS-->
</body></html>
